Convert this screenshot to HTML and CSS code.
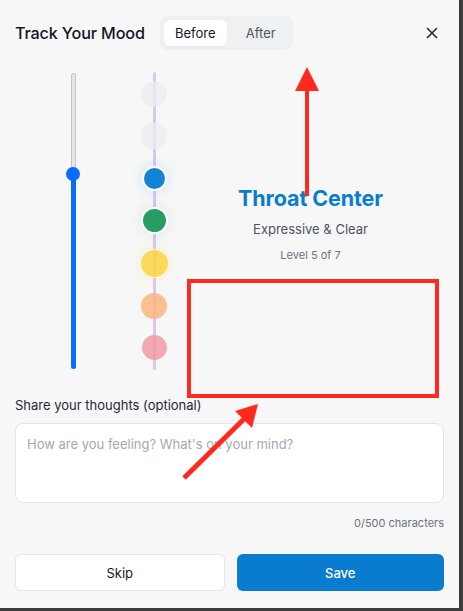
FILE: index.html
```html
<!DOCTYPE html>
<html lang="en">
<head>
<meta charset="utf-8">
<title>Track Your Mood</title>
<link rel="stylesheet" href="styles.css">
</head>
<body>
<div class="frame">
  <div class="modal">
    <header class="header">
      <h1 class="title">Track Your Mood</h1>
      <div class="segment">
        <button class="seg-btn active">Before</button>
        <button class="seg-btn">After</button>
      </div>
      <button class="close" aria-label="Close">
        <svg width="12" height="12" viewBox="0 0 12 12"><path d="M1.5 1.5 L10.5 10.5 M10.5 1.5 L1.5 10.5" stroke="#1f2937" stroke-width="1.6" stroke-linecap="round"/></svg>
      </button>
    </header>

    <section class="main">
      <div class="slider-col">
        <div class="track">
          <div class="track-empty"></div>
          <div class="track-fill"></div>
          <div class="thumb"></div>
        </div>
      </div>
      <div class="chakra-col">
        <div class="slot"><span class="dot dot-off"></span></div>
        <div class="slot"><span class="dot dot-off"></span></div>
        <div class="slot"><span class="dot dot-blue"></span></div>
        <div class="slot"><span class="dot dot-green"></span></div>
        <div class="slot"><span class="dot dot-yellow"></span></div>
        <div class="slot"><span class="dot dot-orange"></span></div>
        <div class="slot"><span class="dot dot-pink"></span></div>
      </div>
      <div class="info">
        <h2 class="chakra-name">Throat Center</h2>
        <p class="chakra-desc">Expressive &amp; Clear</p>
        <p class="chakra-level">Level 5 of 7</p>
      </div>
    </section>

    <section class="notes">
      <label class="notes-label">Share your thoughts (optional)</label>
      <div class="textarea">How are you feeling? What's on your mind?</div>
      <div class="counter">0/500 characters</div>
    </section>

    <footer class="actions">
      <button class="btn btn-skip">Skip</button>
      <button class="btn btn-save">Save</button>
    </footer>

    <svg class="annot" width="459" height="608" viewBox="0 0 459 608">
      <rect x="189" y="281" width="248" height="115" fill="none" stroke="#ff2a1f" stroke-width="4"/>
      <line x1="307" y1="196" x2="307" y2="88" stroke="#ff2a1f" stroke-width="4"/>
      <polygon points="295,91 319,91 307,67" fill="#ff2a1f"/>
      <line x1="184" y1="478" x2="246" y2="417" stroke="#ff2a1f" stroke-width="5"/>
      <polygon points="258,404 235,411 252,428" fill="#ff2a1f"/>
    </svg>
  </div>
</div>
</body>
</html>
```

FILE: styles.css
```css
* { box-sizing: border-box; }
html, body { margin: 0; padding: 0; }
body {
  width: 463px;
  height: 611px;
  background: #3b3b3b;
  font-family: Inter, "Noto Sans", "Liberation Sans", sans-serif;
  overflow: hidden;
}
.frame {
  width: 459px;
  height: 608px;
}
.modal {
  position: relative;
  width: 459px;
  height: 608px;
  background: #f7f7f7;
  padding: 0 15px;
}
.header {
  display: flex;
  align-items: center;
  padding-top: 16px;
  height: 50px;
}
.title {
  margin: 0;
  font-size: 16.2px;
  font-weight: 500;
  color: #111827;
  letter-spacing: -0.15px;
}
.segment {
  margin-left: 15px;
  display: flex;
  background: #eff0f2;
  border-radius: 8px;
  padding: 4px;
  height: 34px;
}
.seg-btn {
  border: 0;
  background: transparent;
  font-family: inherit;
  font-size: 13px;
  color: #4b5563;
  padding: 0 13px 0 19px;
  border-radius: 6px;
  cursor: pointer;
}
.seg-btn.active {
  background: #ffffff;
  color: #111827;
  padding: 0 11px;
  width: 63px;
  box-shadow: 0 1px 2px rgba(0,0,0,0.04);
}
.close {
  margin-left: auto;
  margin-right: 4px;
  border: 0;
  background: transparent;
  padding: 0;
  width: 16px;
  height: 16px;
  display: flex;
  align-items: center;
  justify-content: center;
}

.main {
  display: flex;
  margin-top: 23px;
  height: 296px;
}
.slider-col {
  width: 116px;
  display: flex;
  justify-content: center;
}
.track {
  position: relative;
  width: 5px;
  height: 296px;
  display: flex;
  flex-direction: column;
}
.track-empty {
  height: 101px;
  background: #e6e6e6;
  border: 1px solid #c4c4c4;
  border-bottom: 0;
  border-radius: 3px 3px 0 0;
}
.track-fill {
  flex: 1;
  background: #0a6cff;
  border-radius: 0 0 3px 3px;
}
.thumb {
  position: absolute;
  left: 50%;
  top: 101px;
  width: 14px;
  height: 14px;
  margin: -7px 0 0 -7px;
  border-radius: 50%;
  background: #0a6cff;
}
.chakra-col {
  position: relative;
  width: 46px;
  display: flex;
  flex-direction: column;
}
.chakra-col::before {
  content: "";
  position: absolute;
  left: 50%;
  margin-left: -1.5px;
  top: -1px;
  bottom: -1px;
  width: 3px;
  background: #dac6f3;
  border-radius: 2px;
}
.slot {
  height: 42.3px;
  display: flex;
  align-items: center;
  justify-content: center;
  position: relative;
}
.dot {
  display: block;
  border-radius: 50%;
  width: 26px;
  height: 26px;
}
.dot-off {
  background: rgba(236, 236, 240, 0.75);
}
.dot-blue {
  width: 25px;
  height: 25px;
  background: #1284d4;
  border: 2px solid #ffffff;
  box-shadow: 0 0 14px rgba(18,132,212,0.18);
}
.dot-green {
  width: 27px;
  height: 27px;
  background: #279d63;
  border: 2px solid #ffffff;
  box-shadow: 0 0 14px rgba(39,157,99,0.15);
}
.dot-yellow {
  width: 29px;
  height: 29px;
  background: rgba(252, 212, 64, 0.85);
  border: 1.5px solid rgba(255,255,255,0.8);
  box-shadow: 0 0 14px rgba(252,212,64,0.2);
}
.dot-orange {
  width: 26px;
  height: 26px;
  background: rgba(252, 178, 118, 0.8);
}
.dot-pink {
  width: 25px;
  height: 25px;
  background: rgba(240, 150, 158, 0.8);
}
.info {
  flex: 1;
  display: flex;
  flex-direction: column;
  align-items: center;
  padding-top: 112px;
}
.chakra-name {
  margin: 0;
  font-size: 21.5px;
  font-weight: 700;
  color: #0a7ccf;
  line-height: 26px;
  letter-spacing: -0.1px;
}
.chakra-desc {
  margin: 9px 0 0;
  font-size: 13px;
  color: #4b5563;
  line-height: 18px;
}
.chakra-level {
  margin: 10px 0 0;
  font-size: 11px;
  color: #6b7280;
  line-height: 14px;
}

.notes {
  margin-top: 27px;
}
.notes-label {
  display: block;
  font-size: 13px;
  color: #1f2937;
  line-height: 18px;
}
.textarea {
  margin-top: 9px;
  height: 80px;
  background: #ffffff;
  border: 1px solid #e3e5e8;
  border-radius: 8px;
  padding: 12px 11px;
  font-size: 13px;
  line-height: 17px;
  color: #a3a8b1;
}
.counter {
  margin-top: 13px;
  text-align: right;
  font-size: 11px;
  line-height: 14px;
  color: #6b7280;
}
.actions {
  display: flex;
  gap: 12px;
  margin-top: 24px;
}
.btn {
  flex: 1;
  height: 37px;
  border-radius: 6px;
  font-family: inherit;
  font-size: 13px;
  cursor: pointer;
}
.btn-skip {
  background: #ffffff;
  border: 1px solid #e5e7eb;
  color: #111827;
}
.btn-save {
  background: #0a7ccf;
  border: 0;
  color: #ffffff;
  font-weight: 500;
}
.annot {
  position: absolute;
  left: 0;
  top: 0;
  pointer-events: none;
}
```
